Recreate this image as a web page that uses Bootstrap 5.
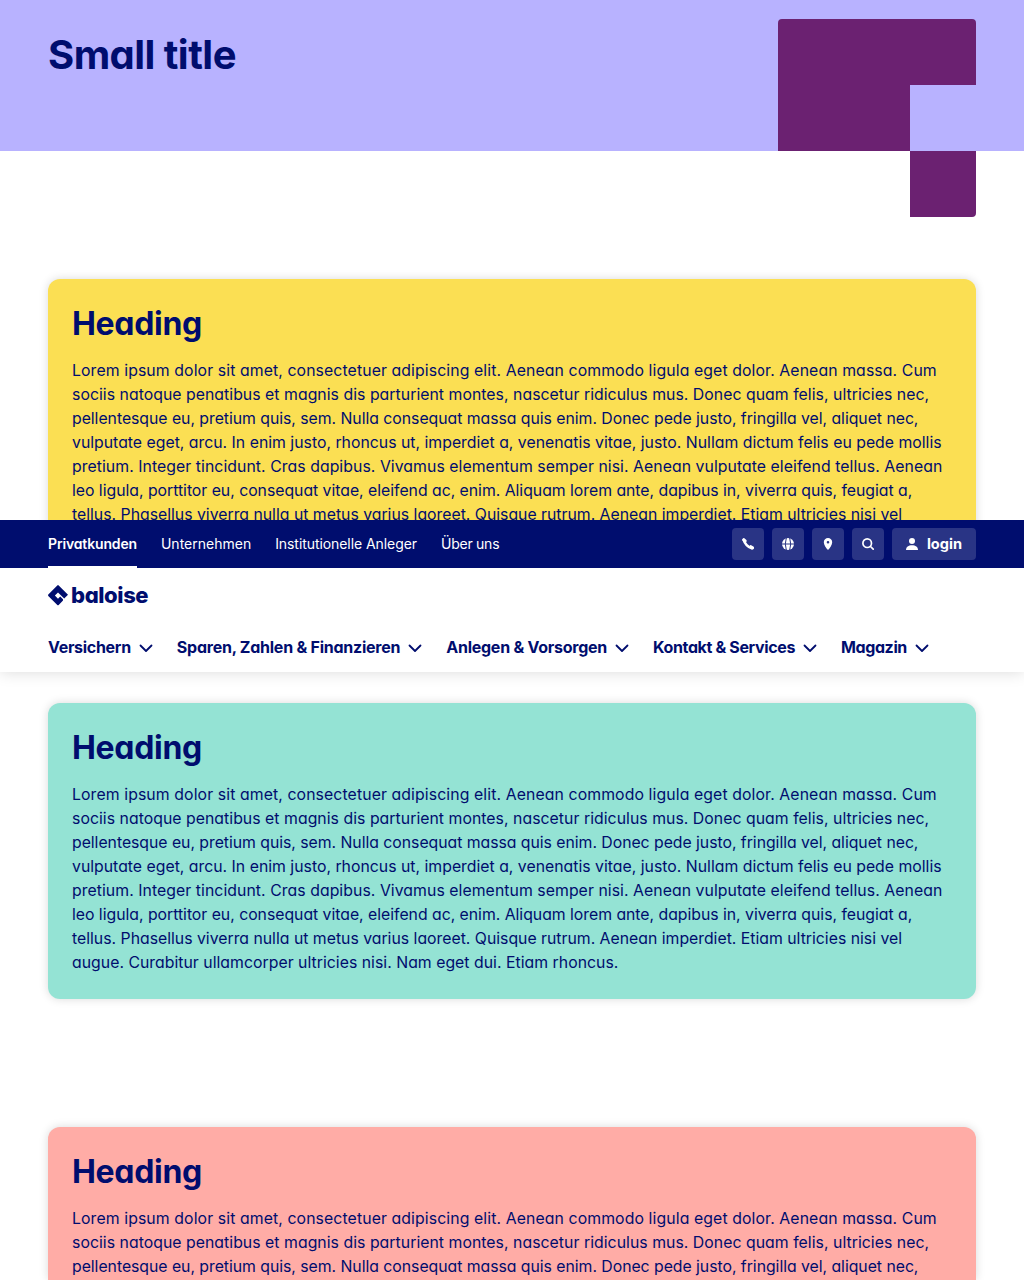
<!DOCTYPE html>
<html lang="de">
<head>
<meta charset="utf-8">
<meta name="viewport" content="width=device-width, initial-scale=1">
<title>Baloise</title>
<link href="https://cdn.jsdelivr.net/npm/bootstrap@5.3.0/dist/css/bootstrap.min.css" rel="stylesheet">
<style>
:root{--navy:#000d6e}
body{font-family:Inter,"Open Sans",sans-serif;font-feature-settings:"cv11";color:var(--navy);font-size:15.8px;line-height:24px;height:1280px;overflow:hidden;background:#fff}
.shell{padding:0 48px}
.stage{height:151px;background:#b8b2ff}
.stage h1{font-size:40px;line-height:48px;font-weight:700;margin:0;padding-top:31px;letter-spacing:-.55px}
.stage-shape{width:198px;height:198px;margin-top:19px;display:block}
.sheet{border-radius:12px;padding:25px 24px 23px;height:296px;margin-bottom:128px;box-shadow:0 0 10px rgba(0,0,0,.15)}
.sheets{padding-top:128px}
.sheet h2{font-size:32px;line-height:40px;font-weight:700;margin:0 0 15px;letter-spacing:-.3px}
.sheet p{margin:0}
.ln{display:block;white-space:nowrap}
.l1{letter-spacing:.105px}.l2{letter-spacing:.04px}.l3{letter-spacing:-.03px}.l4{letter-spacing:.01px}.l5{letter-spacing:.06px}.l6{letter-spacing:-.02px}.l8{letter-spacing:.025px}
.sun{background:#fbdf53}.mint{background:#94e3d4}.coral{background:#ffaca6;height:153px;margin:0;padding-bottom:0;border-radius:12px 12px 0 0}
.site-head{top:520px;left:0;height:152px;background:#fff;box-shadow:0 0 15px rgba(0,0,0,.15);z-index:5;clip-path:inset(0 0 -40px 0)}
.meta-bar{height:48px;background:var(--navy);color:#fff;font-size:14px}
.meta-bar a{color:#fff;text-decoration:none;height:48px;line-height:48px;white-space:nowrap}
.meta-bar a.on{font-weight:600;border-bottom:2px solid #fff}
.m1{letter-spacing:-.15px}.m3{letter-spacing:-.07px}.m4{letter-spacing:-.25px}
.tool{height:32px;width:32px;border:0;border-radius:4px;background:#293485;color:#fff;padding:0}
.tool.wide{width:84px;font-size:14.6px;font-weight:700;gap:9px}
.brand-row{height:56px;padding-top:17px}
.word{font-size:22px;line-height:21px;font-weight:800;margin-left:3px;letter-spacing:-.4px}
.main-row{font-weight:700;font-size:16px;height:46px}
.main-row a{color:var(--navy);text-decoration:none;white-space:nowrap}
.n1{letter-spacing:-.3px}.n2{letter-spacing:-.24px}.n3{letter-spacing:-.25px}.n4{letter-spacing:-.36px}.n5{letter-spacing:-.4px}
.main-row svg{margin-top:1px}
</style>
</head>
<body>
<header class="stage shell d-flex justify-content-between align-items-start">
<h1>Small title</h1>
<svg class="stage-shape" viewBox="0 0 198 198" fill="#6b2171"><path d="M4 0H194a4 4 0 0 1 4 4V66H132V132H0V4a4 4 0 0 1 4-4zM132 132H198V194a4 4 0 0 1-4 4H132z"/></svg>
</header>
<div class="site-head position-absolute w-100">
<div class="meta-bar shell d-flex justify-content-between align-items-center">
<nav class="d-flex gap-4"><a class="on m1" href="#">Privatkunden</a><a class="m2" href="#">Unternehmen</a><a class="m3" href="#">Institutionelle Anleger</a><a class="m4" href="#">Über uns</a></nav>
<div class="d-flex gap-2">
<button class="tool d-flex align-items-center justify-content-center"><svg width="12" height="12" viewBox="0 0 12 12" fill="none" stroke="#fff" stroke-linecap="round" stroke-linejoin="round"><path d="M1.800 2C2.600 5.500 6 9.200 9.800 10.200" stroke-width="2.600"/><path d="M1.800 1.800 3 3M8.800 8.800 10.500 9.900" stroke-width="3.200"/></svg></button>
<button class="tool d-flex align-items-center justify-content-center"><svg width="12" height="12" viewBox="0 0 12 12"><circle cx="6" cy="6" r="6" fill="#fff"/><path d="M0 6H12M4.300 0Q2.300 6 4.300 12M7.700 0Q9.700 6 7.700 12" fill="none" stroke="#293485" stroke-width="1"/></svg></button>
<button class="tool d-flex align-items-center justify-content-center"><svg width="12" height="12" viewBox="0 0 12 12"><path fill="#fff" fill-rule="evenodd" d="M6 0a4.200 4.200 0 0 1 4.200 4.200C10.200 7 7.800 10 6 12 4.200 10 1.800 7 1.800 4.200A4.200 4.200 0 0 1 6 0zM6 2.900a1.300 1.300 0 1 0 0 2.600 1.300 1.300 0 0 0 0-2.600z"/></svg></button>
<button class="tool d-flex align-items-center justify-content-center"><svg width="12" height="12" viewBox="0 0 12 12" fill="none" stroke="#fff" stroke-width="1.700" stroke-linecap="round"><circle cx="5.200" cy="5.200" r="4.300"/><path d="M8.500 8.500 11.200 11.200"/></svg></button>
<button class="tool wide d-flex align-items-center justify-content-center"><svg width="12" height="12" viewBox="0 0 12 12" fill="#fff"><circle cx="6" cy="3" r="3"/><path d="M0 12C0 8.800 2.500 7.200 6 7.200S12 8.800 12 12z"/></svg><span>login</span></button>
</div>
</div>
<div class="brand-row shell d-flex">
<svg width="20" height="21" viewBox="0 0 20 21"><path fill="#000d6e" d="M9.300.4Q10 -.2 10.700.4L20 9.700 16.200 13.600 10 7.400 6.900 10.500 10 13.700 12.200 11.500 15 14.200V15.500L10.700 20Q10 20.600 9.300 20L.3 11Q-.2 10.300.3 9.600z"/></svg>
<span class="word">baloise</span>
</div>
<nav class="main-row shell d-flex align-items-center gap-4">
<a class="d-flex align-items-center gap-2" href="#"><span class="n1">Versichern</span><svg width="14" height="14" viewBox="0 0 14 14"><path d="M1.500 4.500 7 10 12.500 4.500" fill="none" stroke="#000d6e" stroke-width="1.800" stroke-linecap="round" stroke-linejoin="round"/></svg></a>
<a class="d-flex align-items-center gap-2" href="#"><span class="n2">Sparen, Zahlen &amp; Finanzieren</span><svg width="14" height="14" viewBox="0 0 14 14"><path d="M1.500 4.500 7 10 12.500 4.500" fill="none" stroke="#000d6e" stroke-width="1.800" stroke-linecap="round" stroke-linejoin="round"/></svg></a>
<a class="d-flex align-items-center gap-2" href="#"><span class="n3">Anlegen &amp; Vorsorgen</span><svg width="14" height="14" viewBox="0 0 14 14"><path d="M1.500 4.500 7 10 12.500 4.500" fill="none" stroke="#000d6e" stroke-width="1.800" stroke-linecap="round" stroke-linejoin="round"/></svg></a>
<a class="d-flex align-items-center gap-2" href="#"><span class="n4">Kontakt &amp; Services</span><svg width="14" height="14" viewBox="0 0 14 14"><path d="M1.500 4.500 7 10 12.500 4.500" fill="none" stroke="#000d6e" stroke-width="1.800" stroke-linecap="round" stroke-linejoin="round"/></svg></a>
<a class="d-flex align-items-center gap-2" href="#"><span class="n5">Magazin</span><svg width="14" height="14" viewBox="0 0 14 14"><path d="M1.500 4.500 7 10 12.500 4.500" fill="none" stroke="#000d6e" stroke-width="1.800" stroke-linecap="round" stroke-linejoin="round"/></svg></a>
</nav>
</div>
<main class="sheets shell">
<section class="sheet sun"><h2>Heading</h2><p><span class="ln l1">Lorem ipsum dolor sit amet, consectetuer adipiscing elit. Aenean commodo ligula eget dolor. Aenean massa. Cum</span>
<span class="ln l2">sociis natoque penatibus et magnis dis parturient montes, nascetur ridiculus mus. Donec quam felis, ultricies nec,</span>
<span class="ln l3">pellentesque eu, pretium quis, sem. Nulla consequat massa quis enim. Donec pede justo, fringilla vel, aliquet nec,</span>
<span class="ln l4">vulputate eget, arcu. In enim justo, rhoncus ut, imperdiet a, venenatis vitae, justo. Nullam dictum felis eu pede mollis</span>
<span class="ln l5">pretium. Integer tincidunt. Cras dapibus. Vivamus elementum semper nisi. Aenean vulputate eleifend tellus. Aenean</span>
<span class="ln l6">leo ligula, porttitor eu, consequat vitae, eleifend ac, enim. Aliquam lorem ante, dapibus in, viverra quis, feugiat a,</span>
<span class="ln l7">tellus. Phasellus viverra nulla ut metus varius laoreet. Quisque rutrum. Aenean imperdiet. Etiam ultricies nisi vel</span></p></section>
<section class="sheet mint"><h2>Heading</h2><p><span class="ln l1">Lorem ipsum dolor sit amet, consectetuer adipiscing elit. Aenean commodo ligula eget dolor. Aenean massa. Cum</span>
<span class="ln l2">sociis natoque penatibus et magnis dis parturient montes, nascetur ridiculus mus. Donec quam felis, ultricies nec,</span>
<span class="ln l3">pellentesque eu, pretium quis, sem. Nulla consequat massa quis enim. Donec pede justo, fringilla vel, aliquet nec,</span>
<span class="ln l4">vulputate eget, arcu. In enim justo, rhoncus ut, imperdiet a, venenatis vitae, justo. Nullam dictum felis eu pede mollis</span>
<span class="ln l5">pretium. Integer tincidunt. Cras dapibus. Vivamus elementum semper nisi. Aenean vulputate eleifend tellus. Aenean</span>
<span class="ln l6">leo ligula, porttitor eu, consequat vitae, eleifend ac, enim. Aliquam lorem ante, dapibus in, viverra quis, feugiat a,</span>
<span class="ln l7">tellus. Phasellus viverra nulla ut metus varius laoreet. Quisque rutrum. Aenean imperdiet. Etiam ultricies nisi vel</span>
<span class="ln l8">augue. Curabitur ullamcorper ultricies nisi. Nam eget dui. Etiam rhoncus.</span></p></section>
<section class="sheet coral"><h2>Heading</h2><p><span class="ln l1">Lorem ipsum dolor sit amet, consectetuer adipiscing elit. Aenean commodo ligula eget dolor. Aenean massa. Cum</span>
<span class="ln l2">sociis natoque penatibus et magnis dis parturient montes, nascetur ridiculus mus. Donec quam felis, ultricies nec,</span>
<span class="ln l3">pellentesque eu, pretium quis, sem. Nulla consequat massa quis enim. Donec pede justo, fringilla vel, aliquet nec,</span></p></section>
</main>
<script src="https://cdn.jsdelivr.net/npm/bootstrap@5.3.0/dist/js/bootstrap.bundle.min.js"></script>
</body>
</html>
